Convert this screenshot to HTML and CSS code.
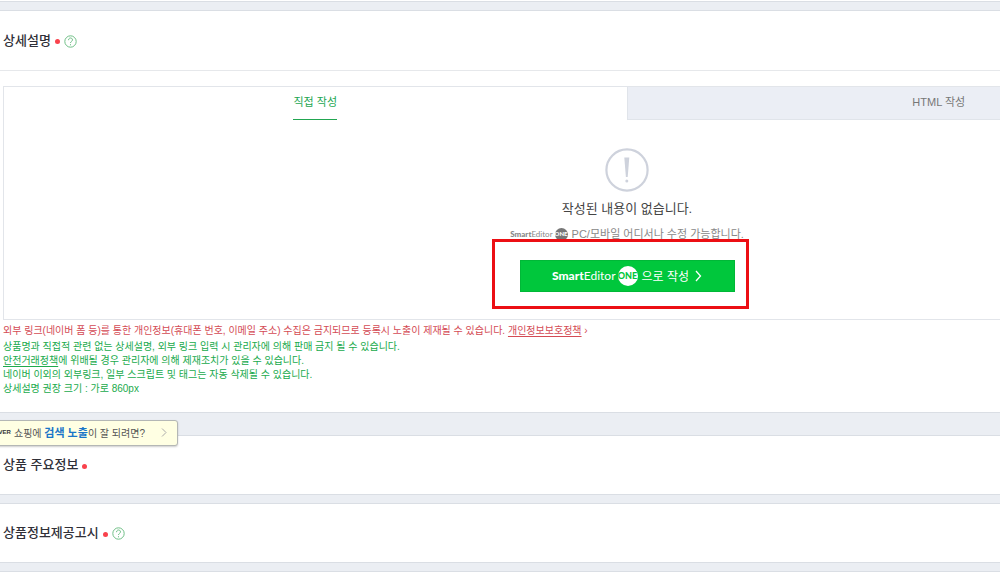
FILE: index.html
```html
<!DOCTYPE html>
<html lang="ko">
<head>
<meta charset="utf-8">
<meta name="viewport" content="width=device-width, initial-scale=1">
<title>상품 등록</title>
<link rel="stylesheet" href="styles.css">
</head>
<body>
<main class="form">
  <section class="card card-previous"></section>

  <section class="card card-detail">
    <header class="card-head divided">
      <h2 class="card-title">상세설명</h2>
      <span class="required"></span>
      <button class="help" type="button" aria-label="도움말">
        <svg viewBox="0 0 13 13"><circle cx="6.5" cy="6.5" r="5.7"/><path d="M4.5 5.2c0-3 4-2.8 4-.3 0 1.4-2 1.5-2 3.1M6.5 9.2v1.1"/></svg>
      </button>
    </header>
    <div class="editor">
      <div class="tabs" role="tablist">
        <button class="tab active" type="button" role="tab" aria-selected="true"><span class="tab-label">직접 작성</span></button>
        <button class="tab" type="button" role="tab" aria-selected="false"><span class="tab-label">HTML 작성</span></button>
      </div>
      <div class="empty">
        <svg class="empty-icon" viewBox="0 0 44 44"><circle cx="22" cy="22" r="20.6" fill="none" stroke="#ced2dc" stroke-width="2.2"/><path d="M19.3 9.5h5L22.7 29h-1.8z" fill="#ced2dc"/><circle cx="21.8" cy="33" r="1.5" fill="#ced2dc"/></svg>
        <p class="empty-title">작성된 내용이 없습니다.</p>
        <p class="empty-text"><span class="logo logo-small"><span><b>Smart</b>Editor</span><b class="logo-one">ONE</b></span>PC/모바일 어디서나 수정 가능합니다.</p>
        <div class="action">
          <button class="write" type="button">
            <span class="logo"><span><b>Smart</b>Editor</span><b class="logo-one">ONE</b></span>으로 작성
            <svg class="write-arrow" viewBox="0 0 7 12"><path d="M1 1l4.5 5L1 11"/></svg>
          </button>
          <div class="highlight"></div>
        </div>
      </div>
    </div>
    <div class="notes">
      <p class="note warning">외부 링크(네이버 폼 등)를 통한 개인정보(휴대폰 번호, 이메일 주소) 수집은 금지되므로 등록시 노출이 제재될 수 있습니다. <a href="#">개인정보보호정책</a> ›</p>
      <p class="note">상품명과 직접적 관련 없는 상세설명, 외부 링크 입력 시 관리자에 의해 판매 금지 될 수 있습니다.</p>
      <p class="note"><a href="#">안전거래정책</a>에 위배될 경우 관리자에 의해 제재조치가 있을 수 있습니다.</p>
      <p class="note">네이버 이외의 외부링크, 일부 스크립트 및 태그는 자동 삭제될 수 있습니다.</p>
      <p class="note">상세설명 권장 크기 : 가로 860px</p>
    </div>
  </section>

  <section class="card card-main">
    <button class="tip" type="button">
      <b class="tip-brand">NAVER</b>
      <span>쇼핑에 <b class="tip-strong">검색 노출</b>이 잘 되려면?</span>
      <svg class="tip-arrow" viewBox="0 0 6 9"><path d="M1 .5l4 4-4 4"/></svg>
    </button>
    <header class="card-head">
      <h2 class="card-title">상품 주요정보</h2>
      <span class="required"></span>
    </header>
  </section>

  <section class="card">
    <header class="card-head">
      <h2 class="card-title">상품정보제공고시</h2>
      <span class="required"></span>
      <button class="help" type="button" aria-label="도움말">
        <svg viewBox="0 0 13 13"><circle cx="6.5" cy="6.5" r="5.7"/><path d="M4.5 5.2c0-3 4-2.8 4-.3 0 1.4-2 1.5-2 3.1M6.5 9.2v1.1"/></svg>
      </button>
    </header>
  </section>

  <section class="card card-next"></section>
</main>
</body>
</html>
```

FILE: styles.css
```css
* { box-sizing: border-box; }

body {
  margin: 0;
  background: #ebeef3;
  color: #333;
  font-family: "Liberation Sans", "Noto Sans CJK KR", sans-serif;
  font-size: 11px;
  overflow: hidden;
}

h2, p { margin: 0; }

button {
  margin: 0;
  padding: 0;
  border: 0;
  background: none;
  color: inherit;
  font: inherit;
}

.form {
  display: flex;
  flex-direction: column;
  gap: 8px;
}

.card {
  position: relative;
  border-top: 1px solid #dadee4;
  border-bottom: 1px solid #dadee4;
  background: #fff;
}

.card-previous { border-top: 0; padding-top: 1px; }

.card-next { min-height: 16px; }

.card-detail { margin-bottom: 14px; }

.card-head {
  display: flex;
  align-items: center;
  height: 58px;
  padding-left: 3px;
}

.divided {
  height: 60px;
  border-bottom: 1px solid #e6e8eb;
}

.card-title {
  color: #303038;
  font-size: 13px;
  font-weight: 500;
  line-height: 20px;
}

.required {
  width: 5px;
  height: 5px;
  margin: 2px 4px 0;
  border-radius: 50%;
  background: #f9424c;
}

.help {
  width: 13px;
  height: 13px;
  margin-top: 1px;
}

.help svg {
  display: block;
  fill: none;
  stroke: #6fbf86;
}

.editor {
  width: calc(125% - 2px);
  margin: 15px 0 0 3px;
  border: 1px solid #e2e5ea;
}

.tabs { display: flex; }

.tab {
  display: flex;
  flex: 1;
  justify-content: center;
  height: 33px;
  border-left: 1px solid #e0e4ea;
  border-bottom: 1px solid #e0e4ea;
  background: #ebeef5;
  color: #777;
}

.tab.active {
  border: 0;
  background: #fff;
  color: #22a651;
}

.tab-label {
  height: 33px;
  line-height: 31px;
}

.active .tab-label { border-bottom: 1px solid #22a651; }

.empty {
  display: flex;
  flex-direction: column;
  align-items: center;
  padding: 28px 0 27px;
}

.empty-icon { width: 44px; height: 44px; }

.empty-title {
  margin-top: 7px;
  color: #444;
  font-size: 13px;
  line-height: 20px;
}

.empty-text {
  display: flex;
  align-items: center;
  gap: 4px;
  margin-top: 7px;
  color: #888;
  line-height: 16px;
}

.logo {
  display: flex;
  align-items: center;
  gap: 2px;
  font-family: Lato, sans-serif;
  font-size: 12px;
}

.logo b { font-weight: 900; }

.logo-one {
  display: flex;
  align-items: center;
  justify-content: center;
  width: 20px;
  height: 20px;
  border-radius: 50%;
  background: #fff;
  color: #00c73c;
  font-size: 9px;
}

.logo-small { font-size: 8px; }

.logo-small .logo-one {
  width: 13px;
  height: 13px;
  background: #777;
  color: #fff;
  font-size: 6px;
}

.action {
  position: relative;
  margin-top: 18px;
}

.write {
  display: flex;
  align-items: center;
  justify-content: center;
  gap: 4px;
  width: 215px;
  height: 32px;
  padding-bottom: 1px;
  border: 1px solid #00b837;
  background: #00c73c;
  color: #fff;
  font-size: 12px;
}

.write-arrow {
  width: 7px;
  height: 12px;
  margin-left: 2px;
  fill: none;
  stroke: #fff;
  stroke-width: 1.3;
}

.highlight {
  position: absolute;
  inset: -21px -14px -17px -28px;
  border: 3px solid #ec0f14;
  pointer-events: none;
}

.notes {
  padding: 4px 3px 16px;
  color: #20aa4c;
  font-size: 10px;
}

.note { line-height: 14px; }

.note a {
  color: inherit;
  text-underline-offset: 2px;
}

.warning {
  margin-bottom: 2px;
  color: #d44b55;
}

.tip {
  position: absolute;
  top: -16px;
  left: -20px;
  display: flex;
  align-items: center;
  justify-content: flex-end;
  gap: 3px;
  width: 198px;
  height: 26px;
  padding: 0 10px 2px 0;
  border: 1px solid #b4b7b5;
  border-radius: 3px;
  background: #ffffe3;
  box-shadow: 0 1px 2px #0003;
  color: #555;
  font-size: 10px;
  white-space: nowrap;
}

.tip-brand {
  color: #333;
  font-size: 6px;
  font-weight: 900;
}

.tip-strong {
  color: #1976c8;
  font-size: 11px;
}

.tip-arrow {
  width: 6px;
  height: 9px;
  margin-left: 13px;
  fill: none;
  stroke: #aaa;
}
```
